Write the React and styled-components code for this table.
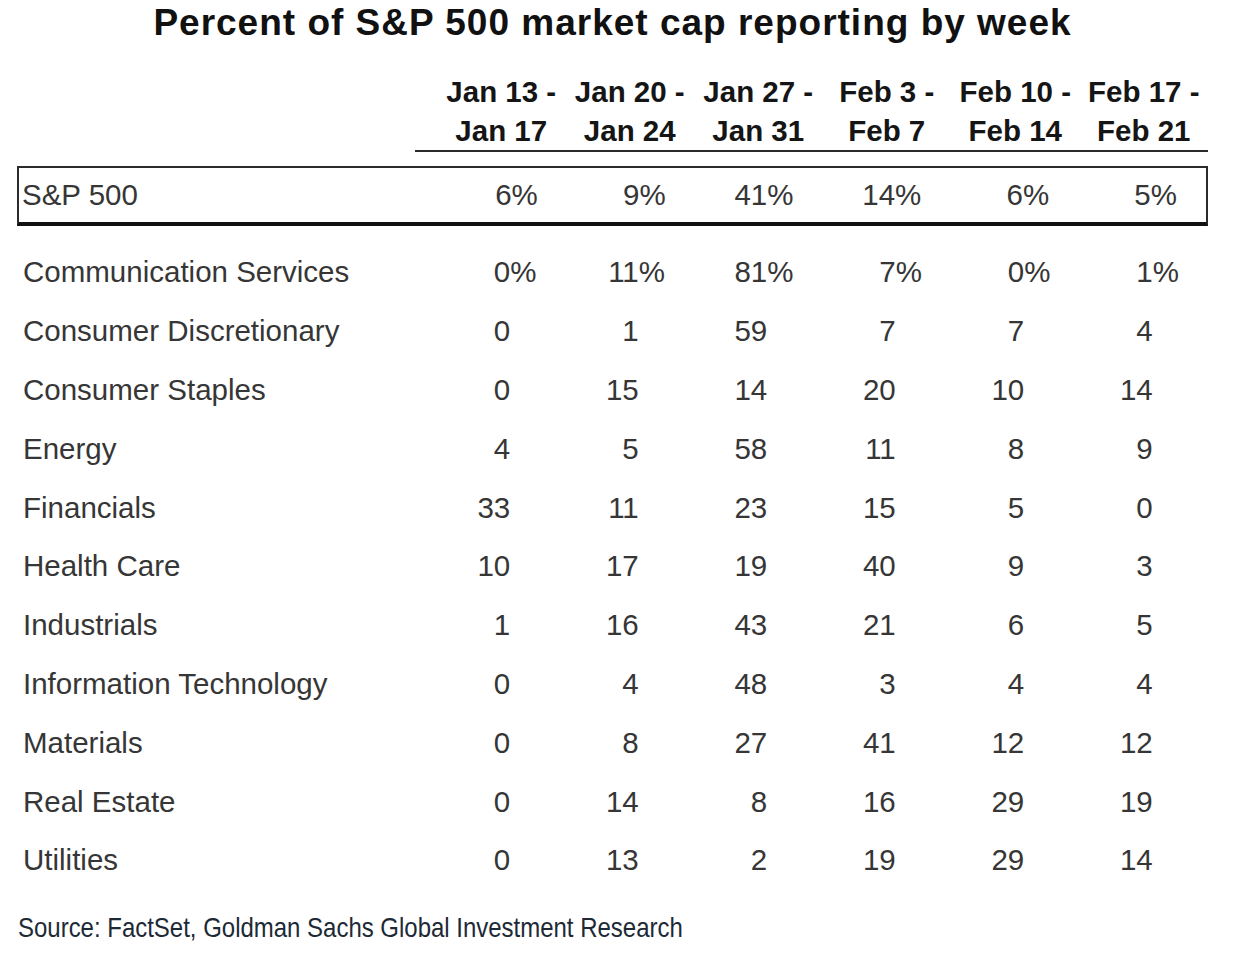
import React from 'react'
import styled, { createGlobalStyle } from 'styled-components'

const GlobalStyle = createGlobalStyle`
  body {
    margin: 0;
    background: #ffffff;
    font-family: "Liberation Sans", Arial, sans-serif;
  }
`

const weeks = [
  ['Jan 13 -', 'Jan 17'],
  ['Jan 20 -', 'Jan 24'],
  ['Jan 27 -', 'Jan 31'],
  ['Feb 3 -', 'Feb 7'],
  ['Feb 10 -', 'Feb 14'],
  ['Feb 17 -', 'Feb 21']
]

const total = [6, 9, 41, 14, 6, 5]

const sectors = [
  { name: 'Communication Services', values: [0, 11, 81, 7, 0, 1], pct: true },
  { name: 'Consumer Discretionary', values: [0, 1, 59, 7, 7, 4] },
  { name: 'Consumer Staples', values: [0, 15, 14, 20, 10, 14] },
  { name: 'Energy', values: [4, 5, 58, 11, 8, 9] },
  { name: 'Financials', values: [33, 11, 23, 15, 5, 0] },
  { name: 'Health Care', values: [10, 17, 19, 40, 9, 3] },
  { name: 'Industrials', values: [1, 16, 43, 21, 6, 5] },
  { name: 'Information Technology', values: [0, 4, 48, 3, 4, 4] },
  { name: 'Materials', values: [0, 8, 27, 41, 12, 12] },
  { name: 'Real Estate', values: [0, 14, 8, 16, 29, 19] },
  { name: 'Utilities', values: [0, 13, 2, 19, 29, 14] }
]

// plain numbers keep an invisible % so they line up like the Excel format
const Value = ({ value, pct }) => (
  <Cell>
    {value}
    <Pct $hidden={!pct}>%</Pct>
  </Cell>
)

export default function App() {
  return (
    <>
      <GlobalStyle />
      <Page>
        <Title>Percent of S&amp;P 500 market cap reporting by week</Title>
        <HeaderRow>
          <HeadCells>
            {weeks.map(w => (
              <HeadCell key={w[0]}>
                <div>{w[0]}</div>
                <div>{w[1]}</div>
              </HeadCell>
            ))}
          </HeadCells>
        </HeaderRow>
        <TotalRow>
          <Label $boxed>S&amp;P 500</Label>
          {total.map((v, i) => (
            <Value key={i} value={v} pct />
          ))}
        </TotalRow>
        <Body>
          {sectors.map(s => (
            <Row key={s.name}>
              <Label>{s.name}</Label>
              {s.values.map((v, i) => (
                <Value key={i} value={v} pct={s.pct} />
              ))}
            </Row>
          ))}
        </Body>
        <SourceLine>
          <Source>Source: FactSet, Goldman Sachs Global Investment Research</Source>
        </SourceLine>
      </Page>
    </>
  )
}

const Page = styled.div`
  width: 1191px;
  margin-left: 17px;
  padding-top: 3px;
`

const Title = styled.div`
  font-size: 37px;
  line-height: 40px;
  letter-spacing: 1px;
  font-weight: bold;
  color: #111;
  text-align: center;
  margin-bottom: 29px;
`

const HeaderRow = styled.div`
  display: flex;
  justify-content: flex-end;
`

const HeadCells = styled.div`
  display: grid;
  grid-template-columns: repeat(6, 128.5px);
  padding-left: 22px;
  border-bottom: 2px solid #2a2a2a;
`

const HeadCell = styled.div`
  font-size: 29.5px;
  line-height: 39px;
  font-weight: bold;
  color: #151515;
  text-align: center;
  white-space: nowrap;
`

const gridCols = `
  display: grid;
  grid-template-columns: 420px repeat(6, 1fr);
  align-items: center;
`

const TotalRow = styled.div`
  ${gridCols}
  box-sizing: border-box;
  margin-top: 14px;
  height: 60px;
  border: 2px solid #2b2b2b;
  border-bottom: 4px solid #111;
`

const Body = styled.div`
  padding-top: 17px;
`

const Row = styled.div`
  ${gridCols}
  height: 58.8px;
`

const Label = styled.div`
  font-size: 29.5px;
  color: #363636;
  padding-left: ${p => (p.$boxed ? '3px' : '6px')};
  white-space: nowrap;
`

const Cell = styled.div`
  font-size: 29.5px;
  color: #363636;
  text-align: right;
  padding-right: 29px;
  white-space: nowrap;
`

const Pct = styled.span`
  visibility: ${p => (p.$hidden ? 'hidden' : 'visible')};
`

const SourceLine = styled.div`
  margin-top: 22px;
  padding-left: 1px;
`

const Source = styled.span`
  display: inline-block;
  font-size: 28px;
  color: #1d2a36;
  white-space: nowrap;
  transform: scaleX(0.856);
  transform-origin: left center;
`
